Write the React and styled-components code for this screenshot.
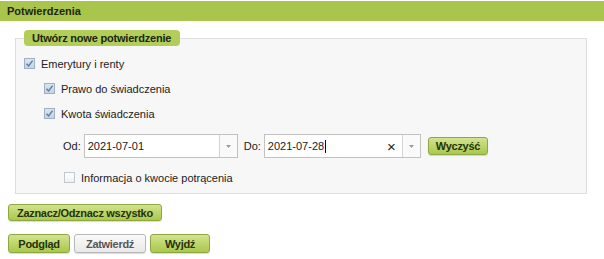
import React from "react";
import styled, { createGlobalStyle } from "styled-components";

const Global = createGlobalStyle`
  html, body { margin: 0; padding: 0; background: #ffffff; }
  body { font-family: "Liberation Sans", Arial, sans-serif; font-size: 11px; color: #222; }
  * { box-sizing: border-box; }
`;

const Page = styled.div`
  width: 604px;
  height: 259px;
  padding-top: 1px;
  display: flex;
  flex-direction: column;
`;

const Header = styled.div`
  height: 20px;
  background: #a9c54b;
  display: flex;
  align-items: center;
  padding-left: 7px;
  font-weight: bold;
  font-size: 11px;
  color: #1b2810;
`;

const Fieldset = styled.fieldset`
  margin: 9px 17px 0 15px;
  padding: 5px 8px 3px 8px;
  border: 1px solid #dedede;
  background: #f7f7f7;
  display: flex;
  flex-direction: column;
  min-width: 0;
`;

const Legend = styled.legend`
  height: 16px;
  padding: 0 9px 0 8px;
  background: #b3cd5b;
  border-radius: 4px;
  font-weight: bold;
  font-size: 11px;
  letter-spacing: -0.2px;
  line-height: 16px;
  color: #1a2608;
`;

const Row = styled.div`
  height: ${(p) => p.$h || 25}px;
  margin-top: ${(p) => p.$mt || 0}px;
  padding-left: ${(p) => p.$indent || 0}px;
  display: flex;
  align-items: center;
`;

const Box = styled.span`
  width: 11px;
  height: 11px;
  flex: none;
  border: 1px solid ${(p) => (p.$checked ? "#9fb0c4" : "#c2c8d0")};
  background: ${(p) =>
    p.$checked
      ? "linear-gradient(#dbe4ee, #c5d3e2)"
      : "linear-gradient(#ffffff, #eef0f2)"};
  display: flex;
  align-items: center;
  justify-content: center;
`;

const Label = styled.span`
  margin-left: ${(p) => p.$ml || 6}px;
  color: #222;
  font-size: 11px;
`;

const FieldLabel = styled.span`
  margin-right: ${(p) => p.$mr || 5}px;
  color: #222;
  font-size: 11px;
`;

const Combo = styled.div`
  width: ${(p) => p.$w}px;
  height: 24px;
  display: flex;
  border: 1px solid #c2c2c2;
  background: #fff;
  margin-right: ${(p) => p.$mr || 0}px;
`;

const Text = styled.div`
  flex: 1;
  display: flex;
  align-items: center;
  padding-left: 3px;
  padding-right: 6px;
  font-size: 11px;
  color: #1a1a1a;
`;

const Caret = styled.span`
  display: inline-block;
  width: 1px;
  height: 13px;
  background: #111;
  margin-left: 1px;
`;

const Clear = styled.span`
  margin-left: auto;
  font-size: 15px;
  color: #222;
  line-height: 1;
`;

const Drop = styled.div`
  width: 18px;
  flex: none;
  border-left: 1px solid #d4d4d4;
  background: #fafafa;
  display: flex;
  align-items: center;
  justify-content: center;
`;

const Button = styled.button`
  height: ${(p) => p.$h || 18}px;
  ${(p) => (p.$w ? `width: ${p.$w}px;` : "")}
  padding: 0 ${(p) => p.$px || 8}px;
  border: 1px solid ${(p) => (p.$plain ? "#b9b9b9" : "#8ea743")};
  border-radius: 3px;
  background: ${(p) =>
    p.$plain
      ? "linear-gradient(#fafafa, #e9e9e9)"
      : "linear-gradient(#d2e38e, #aac84c)"};
  font-family: "Liberation Sans", Arial, sans-serif;
  font-weight: bold;
  font-size: 11px;
  letter-spacing: -0.3px;
  color: ${(p) => (p.$plain ? "#555" : "#24330c")};
  display: flex;
  align-items: center;
  justify-content: center;
  cursor: pointer;
  box-shadow: 0 1px 1px rgba(0, 0, 0, 0.15);
`;

const ButtonRow = styled.div`
  display: flex;
  gap: ${(p) => p.$gap || 5}px;
  padding-left: 8px;
  margin-top: ${(p) => p.$mt || 0}px;
`;

const Check = () => (
  <svg width="9" height="9" viewBox="0 0 9 9">
    <path d="M1.5 4.8 L3.6 7 L7.6 1.6" fill="none" stroke="#5a7cab" strokeWidth="1.4" />
  </svg>
);

const Tri = () => (
  <svg width="5" height="3" viewBox="0 0 5 3">
    <path d="M0 0 L5 0 L2.5 3 Z" fill="#9a9a9a" />
  </svg>
);

const CheckRow = ({ indent, checked, children, ml }) => (
  <Row $indent={indent}>
    <Box $checked={checked}>{checked && <Check />}</Box>
    <Label $ml={ml}>{children}</Label>
  </Row>
);

export default function App() {
  return (
    <Page>
      <Global />
      <Header>Potwierdzenia</Header>
      <Fieldset>
        <Legend>Utwórz nowe potwierdzenie</Legend>
        <CheckRow indent={0} checked>Emerytury i renty</CheckRow>
        <CheckRow indent={20} checked>Prawo do świadczenia</CheckRow>
        <CheckRow indent={20} checked>Kwota świadczenia</CheckRow>
        <Row $indent={39} $h={24} $mt={8}>
          <FieldLabel $mr={3}>Od:</FieldLabel>
          <Combo $w={154} $mr={6}>
            <Text>2021-07-01</Text>
            <Drop><Tri /></Drop>
          </Combo>
          <FieldLabel $mr={3}>Do:</FieldLabel>
          <Combo $w={157} $mr={7}>
            <Text>
              2021-07-28<Caret />
              <Clear>×</Clear>
            </Text>
            <Drop><Tri /></Drop>
          </Combo>
          <Button $h={18} $px={7}>Wyczyść</Button>
        </Row>
        <Row $indent={40} $mt={7}>
          <Box />
          <Label $ml={6}>Informacja o kwocie potrącenia</Label>
        </Row>
      </Fieldset>
      <ButtonRow $mt={10}>
        <Button $h={17} $px={8}>Zaznacz/Odznacz wszystko</Button>
      </ButtonRow>
      <ButtonRow $mt={13} $gap={4}>
        <Button $h={19} $w={62}>Podgląd</Button>
        <Button $h={19} $w={72} $plain>Zatwierdź</Button>
        <Button $h={19} $w={60}>Wyjdź</Button>
      </ButtonRow>
    </Page>
  );
}
